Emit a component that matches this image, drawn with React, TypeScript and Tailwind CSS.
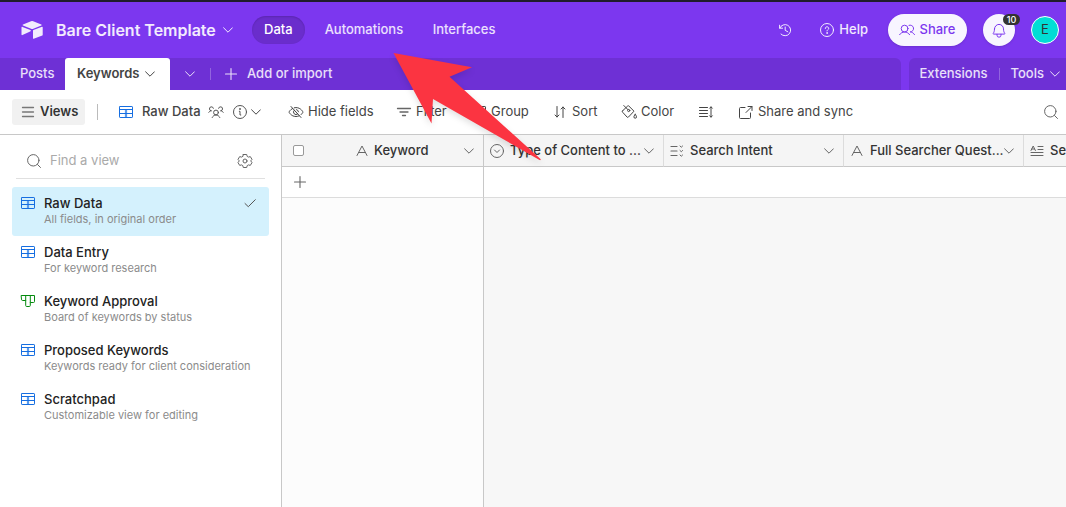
import type { ReactNode } from "react";

type IconProps = { className?: string };

function Svg({ className = "", children }: IconProps & { children: ReactNode }) {
  return (
    <svg
      viewBox="0 0 16 16"
      width="16"
      height="16"
      fill="none"
      stroke="currentColor"
      strokeWidth="1"
      strokeLinecap="round"
      strokeLinejoin="round"
      aria-hidden="true"
      className={`shrink-0 ${className}`}
    >
      {children}
    </svg>
  );
}

const Chevron = ({ className = "" }: IconProps) => (
  <svg
    viewBox="0 0 10 6"
    width="10"
    height="6"
    fill="none"
    stroke="currentColor"
    strokeWidth="1"
    strokeLinecap="round"
    strokeLinejoin="round"
    aria-hidden="true"
    className={`shrink-0 ${className}`}
  >
    <path d="M.6 .8 5 5.200 9.400 .8" />
  </svg>
);

const Logo = () => (
  <svg viewBox="0 0 22 18" width="22" height="18" fill="currentColor" aria-hidden="true" className="shrink-0">
    <path d="M10 .3 2 3.6c-.5.2-.5.8 0 1l8.100 3.200c.7.3 1.500.3 2.200 0l8-3.200c.5-.2.5-.8 0-1L12.200.3a3 3 0 0 0-2.200 0Z" />
    <path d="M12 9.700v7.500c0 .4.4.6.7.500l8.600-3.300c.3-.1.4-.3.4-.5V6.200c0-.4-.4-.6-.7-.5l-8.600 3.400c-.2.1-.4.3-.4.6Z" />
    <path d="M9.600 10.200 7 11.400l-5.600 2.700c-.4.200-.9-.1-.9-.500V6.400c0-.2.1-.300.200-.400.200-.2.500-.2.800-.1l7.900 3.200c.5.200.6.800.2 1.100Z" />
  </svg>
);

const History = () => (
  <Svg>
    <path d="M2.600 3.200v3h3M2.800 6.100a5.600 5.600 0 1 1 1.200 6M8.200 5v3.300l2.600 1.500" />
  </Svg>
);

const Help = () => (
  <Svg>
    <circle cx="8" cy="8" r="6.500" />
    <path d="M6.300 6.500C6.300 5.500 7 4.800 8 4.800s1.700.7 1.700 1.600c0 1.200-1.700 1.300-1.700 2.500" />
    <circle cx="8" cy="11" r=".35" fill="currentColor" />
  </Svg>
);

const Users = () => (
  <Svg>
    <circle cx="5.600" cy="6.600" r="3.400" />
    <path d="M.6 12.700c1.100-1.700 2.900-2.700 5-2.700s3.900 1 5 2.700M10 3.300a3.400 3.400 0 1 1 1.200 6.600c1.800.1 3.300 1.100 4.300 2.700" />
  </Svg>
);

const Bell = () => (
  <Svg>
    <path d="M3.500 6.900a4.500 4.500 0 0 1 9 0c0 2.500.7 3.700 1.300 4.500.2.300 0 .7-.4.700H2.600c-.4 0-.6-.4-.4-.7.6-.8 1.300-2 1.300-4.500ZM6 12.300v.9a2 2 0 0 0 4 0v-.9" />
  </Svg>
);

const Plus = ({ className }: IconProps) => (
  <Svg className={className}>
    <path d="M8 2.500v11M2.500 8h11" strokeWidth="1.100" />
  </Svg>
);

const Menu = () => (
  <Svg className="text-[#777]">
    <path d="M2.500 3.500h11M2.500 8h11M2.500 12.500h11" strokeWidth="1.300" />
  </Svg>
);

const GridView = () => (
  <Svg className="text-[#166ee1]">
    <path d="M8 6v7" strokeWidth="2.400" className="text-[#9fc6f5]" stroke="currentColor" strokeLinecap="butt" />
    <rect x="1.500" y="2.500" width="13" height="11" rx=".6" />
    <path d="M1.500 5.500h13M1.500 9.500h13M8 5.500v8" />
  </Svg>
);

const BoardView = () => (
  <Svg className="text-[#048a0e]">
    <path d="M1.500 2.500h13v6a1 1 0 0 1-1 1h-2.500a1 1 0 0 1-.7-.3v3.300a1 1 0 0 1-1 1H6.700a1 1 0 0 1-1-1V7.200a1 1 0 0 1-.7.300H2.500a1 1 0 0 1-1-1ZM5.700 2.500v5M10.300 2.500v7" />
  </Svg>
);

const Collaborators = () => (
  <Svg className="text-[#555]">
    <circle cx="8" cy="8.500" r="2.400" />
    <path d="M4.200 13.500C4.900 12 6.300 11 8 11s3.100 1 3.800 2.500M.8 8.300c.7-1 1.600-1.500 2.700-1.500a2 2 0 1 1 1.900-2.500M15.200 8.300c-.7-1-1.600-1.500-2.700-1.500a2 2 0 1 0-1.900-2.500" />
  </Svg>
);

const Info = () => (
  <Svg className="text-[#555]">
    <circle cx="8" cy="8" r="6.500" />
    <path d="M7.300 7.300H8v3.700h.8" />
    <circle cx="7.900" cy="5" r=".4" fill="currentColor" />
  </Svg>
);

const HideFields = () => (
  <Svg>
    <path d="M3 2.500l10 11M6.300 3.800A8 8 0 0 1 8 3.600c5 0 7 4.500 7 4.500s-.6 1.300-1.900 2.500M4.600 4.500C2 5.700 1 8.100 1 8.100s2 4.400 7 4.400c1.200 0 2.300-.3 3.200-.7M9.700 9.900A2.500 2.500 0 0 1 6.300 6.200M8.500 5.600a2.500 2.500 0 0 1 2 2.200" />
  </Svg>
);

const Filter = () => (
  <Svg className="text-[#666]">
    <path d="M1.500 4.500h13M4 8h8M6.500 11.500h3" strokeWidth="1.300" />
  </Svg>
);

const Group = () => (
  <Svg>
    <rect x="1.500" y="2.500" width="13" height="11" rx=".6" />
    <path d="M4.500 6h7M4.500 10h7" />
  </Svg>
);

const Sort = () => (
  <Svg>
    <path d="M5 2.500v10.500M3 11l2 2 2-2M11 13.500V3M9 5l2-2 2 2" />
  </Svg>
);

const Color = () => (
  <Svg>
    <path d="M2.800 1.500 7 5.700M1.700 6.700l5-4.700a.8.800 0 0 1 1.100 0l5.200 5.200-5.600 5.900a.9.900 0 0 1-1.300 0L1.700 8.300a1 1 0 0 1 0-1.600Z" />
    <circle cx="7.700" cy="6.500" r="1.100" />
    <path d="M14.200 10.300s1.300 1.700 1.300 2.600a1.300 1.300 0 0 1-2.600 0c0-.9 1.300-2.600 1.300-2.600Z" />
  </Svg>
);

const RowHeight = () => (
  <Svg>
    <path d="M1.500 3.500h8M1.500 6.500h8M1.500 9.500h8M1.500 12.500h8M13 3v10M11.700 4.200 13 2.800l1.300 1.400M11.700 11.800l1.300 1.400 1.300-1.400" />
  </Svg>
);

const ShareOut = () => (
  <Svg>
    <path d="M7 3.500H2.500a1 1 0 0 0-1 1v9a1 1 0 0 0 1 1h9a1 1 0 0 0 1-1V9M10 2.500h4v4M14 2.500 8 8.500" />
  </Svg>
);

const Search = () => (
  <Svg className="text-[#666]">
    <circle cx="7.300" cy="7.300" r="5.700" />
    <path d="m11.500 11.500 3 3" />
  </Svg>
);

const Gear = () => (
  <Svg className="text-[#666]">
    <circle cx="8" cy="8" r="2" />
    <path d="M6.300 1.500h3.400l.5 1.900 1.200.7 1.900-.5L15 6.400l-1.300 1.500L15 9.600l-1.700 2.800-1.900-.5-1.200.7-.5 1.900H6.300l-.5-1.900-1.200-.7-1.900.5L1 9.600l1.300-1.700L1 6.400l1.700-2.800 1.900.5 1.200-.7Z" />
  </Svg>
);

const Check = () => (
  <Svg className="text-[#555]">
    <path d="m3 8.500 3.300 3.200 7-7" />
  </Svg>
);

const TextField = () => (
  <Svg>
    <path d="M3 12.500 8 3l5 9.500M4.800 9.500h6.400" />
  </Svg>
);

const SingleSelect = () => (
  <Svg>
    <circle cx="8" cy="8" r="6.500" />
    <path d="m5.500 7 2.500 2.500L10.500 7" />
  </Svg>
);

const MultiSelect = () => (
  <Svg>
    <path d="M2 3.500h6M2 8h6M2 12.500h6" strokeWidth="1.200" />
    <path d="m11 3 1.300 1.200L13.600 3M11 7.500l1.300 1.200 1.300-1.200M11 12l1.300 1.200 1.300-1.200" />
  </Svg>
);

const LongText = () => (
  <Svg>
    <path d="M2 7.500 4.200 3l2.200 4.500M2.800 6h2.800M9 3.500h5M9 6.500h5M2 9.500h12M2 12.500h12" />
  </Svg>
);

const views = [
  { name: "Raw Data", note: "All fields, in original order", active: true },
  { name: "Data Entry", note: "For keyword research" },
  { name: "Keyword Approval", note: "Board of keywords by status", board: true },
  { name: "Proposed Keywords", note: "Keywords ready for client consideration" },
  { name: "Scratchpad", note: "Customizable view for editing" },
];

const fields = [
  { label: "Type of Content to ...", icon: <SingleSelect /> },
  { label: "Search Intent", icon: <MultiSelect /> },
  { label: "Full Searcher Quest...", icon: <TextField /> },
  { label: "Se", icon: <LongText /> },
];

function Tool({ icon, label, className }: { icon: ReactNode; label: string; className: string }) {
  return (
    <button className={`flex shrink-0 items-center gap-1 whitespace-nowrap ${className}`}>
      {icon}
      {label}
    </button>
  );
}

function TopBar() {
  return (
    <header className="flex h-14 items-center pr-[7px] pl-[21px] text-[13px] font-medium text-white/90">
      <button className="flex items-center text-[16px] font-semibold">
        <Logo />
        <span className="ml-[13px] w-[167px] text-left whitespace-nowrap">Bare Client Template</span>
        <Chevron />
      </button>
      <nav className="ml-[19px] flex items-center gap-2">
        <a href="#data" className="flex h-7 items-center rounded-full bg-[#6a2dcc] px-3 text-white shadow-[inset_0_1px_2px_rgba(0,0,0,0.15)]">
          Data
        </a>
        <a href="#automations" className="w-25 px-3 whitespace-nowrap text-white/85">Automations</a>
        <a href="#interfaces" className="px-3 text-white/85">Interfaces</a>
      </nav>
      <div className="ml-auto flex items-center">
        <button aria-label="History" className="mr-[26px]"><History /></button>
        <button className="mr-5 flex items-center gap-1"><Help />Help</button>
        <button className="mr-4 flex h-8 w-[79px] items-center justify-center gap-1 rounded-full bg-[#f8f5ff] text-[#7c37ef] shadow-sm">
          <Users />
          Share
        </button>
        <button aria-label="Notifications" className="relative mr-4 flex size-8 items-center justify-center rounded-full bg-[#f8f5ff] text-[#7c37ef] shadow-sm">
          <Bell />
          <span className="absolute top-0 left-5 flex h-[11px] w-[17px] items-center justify-center rounded-full bg-[#333] text-[9px] font-medium text-white">
            10
          </span>
        </button>
        <button aria-label="Account" className="flex size-7 items-center justify-center rounded-full border border-white bg-[#01ddd5] text-[13px] font-normal text-[#333]">
          E
        </button>
      </div>
    </header>
  );
}

function TableTabs() {
  return (
    <div className="flex h-8 gap-2 text-[13px] font-medium whitespace-nowrap text-white/85">
      <div className="flex flex-1 items-center rounded-tr-md bg-[#6e30d5]">
        <button className="w-[65px] pl-5 text-left">Posts</button>
        <button className="flex h-8 w-[105px] items-center justify-between rounded-t-[3px] bg-white pr-[15px] pl-3 font-semibold text-[#444]">
          Keywords
          <Chevron />
        </button>
        <button aria-label="All tables" className="flex h-8 w-10 items-center justify-center"><Chevron /></button>
        <span className="h-3 w-px bg-white/25" />
        <button className="ml-3 flex items-center gap-2"><Plus />Add or import</button>
      </div>
      <div className="flex items-center rounded-tl-md bg-[#6e30d5] pr-[6px] pl-[11px]">
        <button>Extensions</button>
        <span className="mx-[11px] h-3 w-px bg-white/25" />
        <button className="flex items-center gap-[6px]">Tools<Chevron /></button>
      </div>
    </div>
  );
}

function Toolbar() {
  return (
    <div className="flex h-[45px] items-center border-b border-[#c8c8c8] pr-[7px] pl-3 text-[13px] text-[#444]">
      <button className="flex h-[26px] w-[73px] items-center gap-1 rounded-[3px] bg-[#f1f1f1] pl-2 font-semibold text-[#333]">
        <Menu />
        Views
      </button>
      <span className="mr-5 ml-3 h-4 w-px bg-[#bbb]" />
      <button className="mr-[27px] flex items-center font-medium whitespace-nowrap">
        <GridView />
        <span className="ml-2 w-[66px] text-left">Raw Data</span>
        <Collaborators />
        <span className="mr-[3px] ml-2"><Info /></span>
        <Chevron />
      </button>
      <Tool icon={<HideFields />} label="Hide fields" className="w-27" />
      <Tool icon={<Filter />} label="Filter" className="w-[75px]" />
      <Tool icon={<Group />} label="Group" className="w-[81px]" />
      <Tool icon={<Sort />} label="Sort" className="w-[69px]" />
      <Tool icon={<Color />} label="Color" className="w-[77px]" />
      <button aria-label="Row height" className="mr-6"><RowHeight /></button>
      <Tool icon={<ShareOut />} label="Share and sync" className="w-30" />
      <button aria-label="Search" className="ml-auto"><Search /></button>
    </div>
  );
}

function Sidebar() {
  return (
    <aside className="w-[282px] shrink-0 border-r border-[#c8c8c8] bg-white px-3 pt-2">
      <div className="mx-1 mb-2 flex h-9 items-center border-b border-[#e0e0e0] pr-3 pl-[10px]">
        <Search />
        <input
          aria-label="Find a view"
          placeholder="Find a view"
          className="mx-2 min-w-0 flex-1 bg-transparent text-[13px] text-[#333] outline-none placeholder:text-[#aaa]"
        />
        <button aria-label="View settings"><Gear /></button>
      </div>
      <ul>
        {views.map((v) => (
          <li key={v.name}>
            <button className={`flex h-[49px] w-full items-start rounded-[3px] px-2 pt-2 text-left ${v.active ? "bg-[#d4f1fd]" : ""}`}>
              {v.board ? <BoardView /> : <GridView />}
              <span className="ml-2 flex-1">
                <span className="block text-[13px] leading-4 font-medium text-[#222]">{v.name}</span>
                <span className="block text-[11px] leading-4 text-[#8b8b8b]">{v.note}</span>
              </span>
              {v.active && <span className="mr-[3px]"><Check /></span>}
            </button>
          </li>
        ))}
      </ul>
    </aside>
  );
}

function Grid() {
  return (
    <div className="min-w-0 flex-1 overflow-hidden bg-[#f7f7f7]">
      <table className="h-full w-max min-w-full table-fixed border-separate border-spacing-0 text-[13px] text-[#333]">
        <thead>
          <tr className="h-8 bg-[#f5f5f5]">
            <th className="w-[202px] border-r border-b border-[#c8c8c8] p-0 font-medium">
              <span className="flex w-[201px] items-center pr-[9px] pl-[11px]">
                <input type="checkbox" aria-label="Select all" className="mr-[50px] size-[11px] appearance-none rounded-[2px] border border-[#999] bg-white" />
                <span className="text-[#666]"><TextField /></span>
                <span className="ml-1 flex-1 text-left">Keyword</span>
                <Chevron className="text-[#666]" />
              </span>
            </th>
            {fields.map((f) => (
              <th key={f.label} className="w-[180px] border-r border-b border-r-[#dcdcdc] border-b-[#c8c8c8] p-0 font-medium">
                <span className="flex w-[179px] items-center pr-[9px] pl-[5px]">
                  <span className="text-[#666]">{f.icon}</span>
                  <span className="ml-[5px] flex-1 text-left whitespace-nowrap">{f.label}</span>
                  <Chevron className="text-[#666]" />
                </span>
              </th>
            ))}
          </tr>
        </thead>
        <tbody>
          <tr className="h-[31px] bg-white">
            <td className="border-r border-b border-r-[#c8c8c8] border-b-[#dcdcdc] p-0 pl-[10px]">
              <button aria-label="Add record" className="flex text-[#666]"><Plus /></button>
            </td>
            <td colSpan={4} className="border-b border-[#dcdcdc] p-0" />
          </tr>
          <tr>
            <td className="border-r border-[#c8c8c8] bg-[#fcfcfc] p-0" />
            <td colSpan={4} className="p-0" />
          </tr>
        </tbody>
      </table>
    </div>
  );
}

export default function App() {
  return (
    <div className="relative flex h-screen flex-col overflow-hidden bg-white font-['Inter','Liberation_Sans',sans-serif]">
      <div className="border-t-2 border-[#201c2b] bg-[#7c37ef]">
        <TopBar />
        <TableTabs />
      </div>
      <Toolbar />
      <main className="flex min-h-0 flex-1">
        <Sidebar />
        <Grid />
      </main>
      <svg
        viewBox="0 0 148 108"
        width="148"
        height="108"
        aria-hidden="true"
        className="pointer-events-none absolute top-[53px] left-[393px] overflow-visible drop-shadow-md"
      >
        <path d="M.5 0 79 14.300 56.500 23.700 147.500 106c.5.7-.2 1.500-1 1L40 46 38.500 70.500Z" fill="#fb3441" />
      </svg>
    </div>
  );
}
